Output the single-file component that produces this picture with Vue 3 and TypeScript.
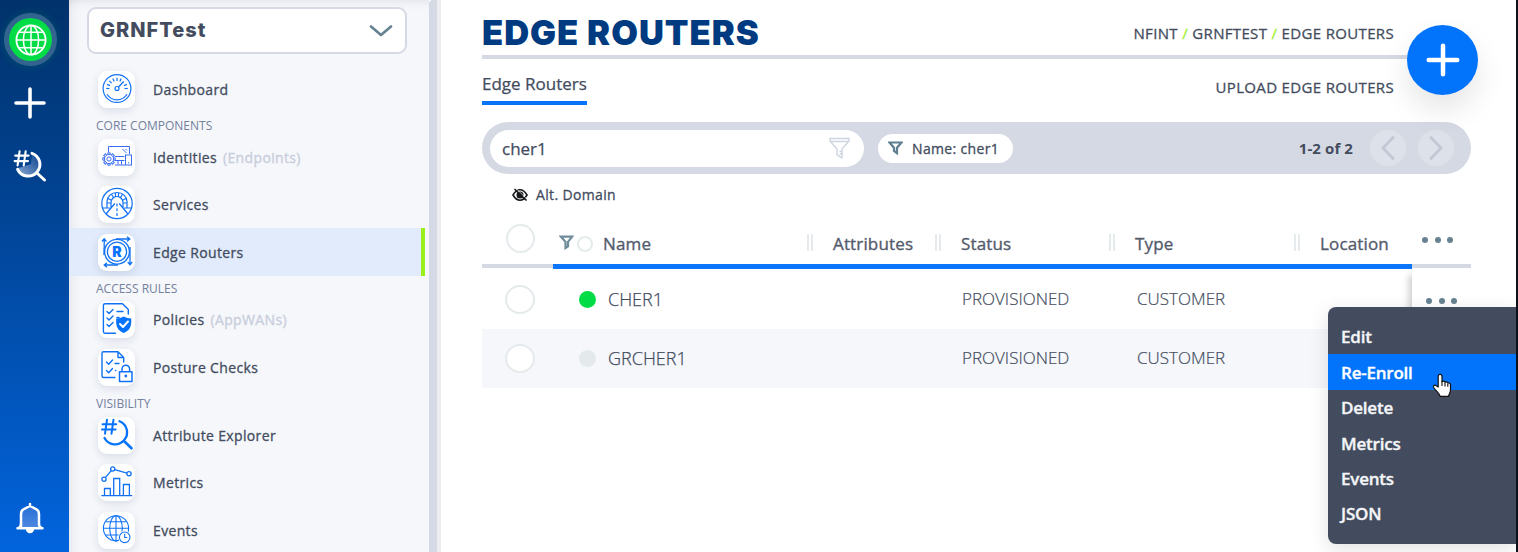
<script setup lang="ts">
interface NavItem {
  icon: string
  label: string
  hint?: string
  active?: boolean
}
interface NavGroup {
  title?: string
  items: NavItem[]
}

const groups: NavGroup[] = [
  { items: [{ icon: 'dashboard', label: 'Dashboard' }] },
  {
    title: 'CORE COMPONENTS',
    items: [
      { icon: 'identities', label: 'Identities', hint: '(Endpoints)' },
      { icon: 'services', label: 'Services' },
      { icon: 'routers', label: 'Edge Routers', active: true },
    ],
  },
  {
    title: 'ACCESS RULES',
    items: [
      { icon: 'policies', label: 'Policies', hint: '(AppWANs)' },
      { icon: 'posture', label: 'Posture Checks' },
    ],
  },
  {
    title: 'VISIBILITY',
    items: [
      { icon: 'attributes', label: 'Attribute Explorer' },
      { icon: 'metrics', label: 'Metrics' },
      { icon: 'events', label: 'Events' },
    ],
  },
]

const routers = [
  { name: 'CHER1', online: true, status: 'PROVISIONED', type: 'CUSTOMER' },
  { name: 'GRCHER1', online: false, status: 'PROVISIONED', type: 'CUSTOMER' },
]

const actions = ['Edit', 'Re-Enroll', 'Delete', 'Metrics', 'Events', 'JSON']
const hovered = 'Re-Enroll'

const ticks = Array.from({ length: 9 }, (_, i) => -90 + i * 22.5).filter((a) => a !== 45)
const teeth = Array.from({ length: 8 }, (_, i) => i * 45)
</script>

<template>
  <div class="app">
    <nav class="rail">
      <div class="org">
        <svg width="32" height="32" viewBox="0 0 32 32" fill="none" stroke="#fff" stroke-width="1.5">
          <circle cx="16" cy="16" r="14.6" stroke-width="1.8" />
          <ellipse cx="16" cy="16" rx="7.6" ry="14.6" />
          <path d="M16 1.4v29.2M1.4 16h29.2M3.6 8.3h24.8M3.6 23.7h24.8" />
        </svg>
      </div>
      <svg class="rail-plus" width="32" height="32" viewBox="0 0 32 32" stroke="#fff" stroke-width="3.6" stroke-linecap="round">
        <path d="M16 2v28M2 16h28" />
      </svg>
      <svg class="rail-find" width="34" height="34" viewBox="0 0 34 34" fill="none" stroke="#fff">
        <defs>
          <linearGradient id="lens" x1="0" y1="1" x2="1" y2="0">
            <stop offset="0" stop-color="#8aa8d2" />
            <stop offset="1" stop-color="#0a4390" />
          </linearGradient>
        </defs>
        <path d="M19 4.5a11.5 11.5 0 1 1-15 15L18 15z" fill="url(#lens)" stroke="none" />
        <path d="M19 4.3a11.7 11.7 0 1 1-14.400 16M24.500 24.500l7 6.500" stroke-width="3" stroke-linecap="round" />
        <path d="M6.600 2.200L4.600 16.400M12.700 2.200l-2 14.200M2.200 6.600h13.400M1.600 12.100H15" stroke-width="2.100" stroke-linecap="round" />
      </svg>
      <svg class="rail-bell" width="30" height="34" viewBox="0 0 30 34">
        <defs>
          <linearGradient id="bell" x1="0" y1="1" x2="0" y2="0">
            <stop offset="0" stop-color="#4d88e0" />
            <stop offset="1" stop-color="#2a70d6" />
          </linearGradient>
        </defs>
        <path d="M6 26.500V12L15 6l9 6v14.500z" fill="url(#bell)" />
        <path d="M2.500 27.300h25M6 27V13.400Q6 9.500 8.500 8.300L15 5l6.500 3.300Q24 9.500 24 13.400V23q0 3 2.500 4M6 22q0 4-2.500 5M15 5V3" fill="none" stroke="#fff" stroke-width="2.500" stroke-linecap="round" />
        <path d="M10.800 28h8.400a4.200 4.200 0 0 1-8.400 0z" fill="#fff" />
      </svg>
    </nav>

    <aside class="side">
      <div class="network">
        <span>GRNFTest</span>
        <svg width="24" height="14" viewBox="0 0 24 14" fill="none" stroke="#668291" stroke-width="2.700" stroke-linecap="round" stroke-linejoin="round">
          <path d="M2 2.500l10 8.500 10-8.500" />
        </svg>
      </div>
      <section v-for="(g, i) in groups" :key="i">
        <h2 v-if="g.title">{{ g.title }}</h2>
        <div v-for="item in g.items" :key="item.label" class="nav" :class="{ active: item.active }">
          <div class="tile">
            <svg width="37" height="37" viewBox="0 0 37 37" fill="none" stroke="#1071f5" stroke-width="1.200">
              <g v-if="item.icon === 'dashboard'">
                <circle cx="19" cy="17.500" r="13.900" />
                <circle cx="19" cy="17.500" r="2" />
                <path d="M20.500 16l5.200-5.500" stroke-width="1.300" />
                <path v-for="a in ticks" :key="a" d="M19 6.700v3.300" :transform="`rotate(${a} 19 17.500)`" />
                <path d="M9 23.300q3.500 5.500 10 5.500t10-5.500" />
              </g>
              <g v-else-if="item.icon === 'identities'" stroke="#3a6df3" stroke-width="1">
                <path d="M10.500 13V7.500h21V15M17 17.500h9.500M24.500 10l4 4M27.500 10l1.500 1.500M17 21.500h9.500M20 21.500v4M23.500 21.500v4M17 26h10" />
                <rect x="27.500" y="16" width="6" height="10" />
                <path d="M30 23.800h1.200" />
                <circle cx="11" cy="20" r="4.600" />
                <circle cx="11" cy="20" r="2.100" />
                <path v-for="a in teeth" :key="a" d="M9.800 15.300v-1.500h2.400v1.500" :transform="`rotate(${a} 11 20)`" />
              </g>
              <g v-else-if="item.icon === 'services'">
                <circle cx="19" cy="17.500" r="15.200" />
                <path d="M4.500 22h7.300M26.200 22h7.300M9 21.500V15.500a10 9 0 0 1 20 0v6M13 21.500v-5a6 6 0 0 1 12 0v5M9 17h4m12 0h4M10 12.500l4 2m14-2l-4 2M13.500 8.200l2.500 4m8.500-4l-2.500 4M17.500 6.700v4.300m3-4.300v4.300M16.800 17.500L8 28M21.200 17.500L30 28" />
                <path d="M19 17.500v15" stroke-dasharray="3 1.800" />
              </g>
              <g v-else-if="item.icon === 'routers'" stroke-width="1.300">
                <circle cx="19" cy="17.700" r="12.400" />
                <circle cx="19" cy="17.700" r="9.600" />
                <path d="M6.200 14V5.200M4 7.500l2.200-2.800 2.200 2.800M18 5h13.500M29 2.700L31.800 5 29 7.200M32 20v10.500M29.800 28l2.200 2.800L34.200 28M20 31H6.500M9 28.700L6.200 31 9 33.300M6 14v7M32 13v8" />
                <text x="19" y="22.700" text-anchor="middle" class="glyph">R</text>
              </g>
              <g v-else-if="item.icon === 'policies'" stroke-width="1.400" stroke-linecap="round" stroke-linejoin="round">
                <path d="M30.300 13V8.500L24.500 2.700H7Q5.400 2.700 5.400 4.300V30.500Q5.400 32.200 7 32.200H17.500M19 10.500h6M19 16.500h2" />
                <path d="M9 10.500l2 2 4-4M9 17l2 2 4-4M9 23.500l2 2 4-4" />
                <path d="M25.700 15.500q3.500 2 7.500 2c.6 8-1.500 12-7.500 14.500-6-2.500-8.100-6.500-7.500-14.500q4 0 7.500-2z" fill="#0773fb" stroke="none" />
                <path d="M22 23l3 3 5-5.500" stroke="#fff" stroke-width="2" />
              </g>
              <g v-else-if="item.icon === 'posture'" stroke-width="1.400" stroke-linecap="round" stroke-linejoin="round">
                <path d="M25.700 13V8.500L20 2.800H5.500Q4 2.800 4 4.300V27Q4 28.500 5.500 28.500H17M20 2.800V8.500h5.700M17 14.500h4M17.500 21.500h.3" />
                <path d="M8.500 13l2.200 2.200L14.500 11M8.500 21.500l2.200 2.200 3.800-4.200" />
                <path d="M21.500 22.800h12.500v9.800H21.500zM24 22.500v-2.500a3.800 3.800 0 0 1 7.600 0v2.500" stroke-width="1.500" />
                <circle cx="27.800" cy="27" r=".7" fill="#1071f5" />
              </g>
              <g v-else-if="item.icon === 'attributes'" stroke="#0773fb" stroke-linecap="round">
                <path d="M21.500 4.200A12 12 0 1 1 6.500 21" stroke-width="2.300" />
                <path d="M26.800 24.800l6.700 6.500" stroke-width="2.600" />
                <path d="M9 2.700L7 16.700M15.500 2.700l-2 14M4.600 7.200h13.600M4 12.500h13.600" stroke-width="2" />
              </g>
              <g v-else-if="item.icon === 'metrics'" stroke-width="1.300">
                <path d="M3.300 31.700h31M6.500 31.500v-7h5.800v7M15.700 31.500v-17h6v17M25.400 31.500v-11h6v11M7.300 13.600l6-7M16.700 5.600l12.300 3.600" />
                <circle cx="6" cy="15.300" r="2.100" />
                <circle cx="14.700" cy="5" r="2.100" />
                <circle cx="31" cy="9.700" r="2.100" />
              </g>
              <g v-else stroke-width="1.100">
                <circle cx="18" cy="16.300" r="12.600" />
                <ellipse cx="18" cy="16.300" rx="6.300" ry="12.600" />
                <path d="M18 3.700v25.200M5.400 16.300h25.200M7.500 9.700h21M7.500 23h21" />
                <circle cx="26.700" cy="25.300" r="6.600" fill="#fff" stroke="none" />
                <circle cx="26.700" cy="25.300" r="5.300" />
                <path d="M26.700 21.800v3.700h2.600" />
              </g>
            </svg>
          </div>
          <span class="label">{{ item.label }}</span>
          <span v-if="item.hint" class="hint">{{ item.hint }}</span>
        </div>
      </section>
    </aside>
    <div class="scroll"></div>

    <main>
      <header>
        <h1>EDGE ROUTERS</h1>
        <div class="crumbs">NFINT <i>/</i> GRNFTEST <i>/</i> EDGE ROUTERS</div>
      </header>
      <div class="tabs">
        <span class="tab">Edge Routers</span>
        <span class="upload">UPLOAD EDGE ROUTERS</span>
      </div>

      <div class="filter">
        <div class="search">
          <span>cher1</span>
          <svg width="21" height="22" viewBox="0 0 21 22" fill="none" stroke="#ced4e0" stroke-width="1.400" stroke-linejoin="round">
            <path d="M1 1.500h19v2.500l-7 8v9l-5-3.200V12L1 4zM1 4.500h19M10.500 14.500h2.500M10.500 17h2.500" />
          </svg>
        </div>
        <div class="chip">
          <svg width="15" height="14" viewBox="0 0 15 14" fill="none" stroke="#5f7f91" stroke-width="2.200">
            <path d="M1.500 1.500h12L9 6.700v5.500L6 10V6.700z" />
          </svg>
          <span>Name: cher1</span>
        </div>
        <span class="count">1-2 of 2</span>
        <div class="page">
          <svg width="14" height="24" viewBox="0 0 14 24"><path d="M12 1.500L2 12l10 10.500" /></svg>
        </div>
        <div class="page next">
          <svg width="14" height="24" viewBox="0 0 14 24"><path d="M2 1.500L12 12 2 22.500" /></svg>
        </div>
      </div>

      <div class="toggle">
        <svg width="16" height="14" viewBox="0 0 16 14" fill="none" stroke="#16181c">
          <path d="M1 7Q4 1.800 8 1.800T15 7Q12 12.200 8 12.200T1 7z" stroke-width="1.600" />
          <circle cx="8" cy="7" r="3.500" fill="#16181c" stroke="none" />
          <path d="M2.500 1l12 11.500" stroke-width="1.700" />
          <path d="M4 .5l11 10.500" stroke="#fff" stroke-width=".6" />
        </svg>
        <span>Alt. Domain</span>
      </div>

      <div class="grid">
        <div class="row head">
          <div class="c-check"><span class="ring"></span></div>
          <div class="c-name">
            <svg width="15" height="15" viewBox="0 0 15 15" fill="none" stroke="#6f8c9b" stroke-width="2.200">
              <path d="M1.800 1.600h11.400L9 6.800v4.700L6.500 13V6.800z" />
            </svg>
            <span class="mini"></span>
            <b>Name</b>
          </div>
          <div class="c-attr"><b>Attributes</b></div>
          <div class="c-status"><b>Status</b></div>
          <div class="c-type"><b>Type</b></div>
          <div class="c-loc"><b>Location</b></div>
          <div class="c-more"><u></u><u></u><u></u></div>
        </div>
        <div v-for="r in routers" :key="r.name" class="row body">
          <div class="c-check"><span class="ring"></span></div>
          <div class="c-name"><span class="dot" :class="{ on: r.online }"></span><span class="rname">{{ r.name }}</span></div>
          <div class="c-attr"></div>
          <div class="c-status">{{ r.status }}</div>
          <div class="c-type">{{ r.type }}</div>
          <div class="c-loc"></div>
          <div class="c-more"><u></u><u></u><u></u></div>
        </div>
      </div>
    </main>
    <div class="edge"></div>

    <button class="add">
      <svg width="34" height="34" viewBox="0 0 34 34" stroke="#fff" stroke-width="4.500" stroke-linecap="round">
        <path d="M17 2.700v28.600M2.700 17h28.600" />
      </svg>
    </button>

    <ul class="menu">
      <li v-for="a in actions" :key="a" :class="{ hover: a === hovered }">{{ a }}</li>
    </ul>
    <svg class="cursor" width="20" height="26" viewBox="0 0 20 26">
      <path d="M6.200 14V3.200a1.900 1.900 0 0 1 3.800 0V8.500q2-.8 3 .7 1.800-.7 2.800.8 2.500-.4 2.700 1.800v5c0 3-1.500 4-2 6.500H8.200C7.500 20.500 3.500 17.500 1.700 14.500.8 12.800 2.500 11.500 4 12.500z" fill="#fff" stroke="#111" stroke-width="1.200" stroke-linejoin="round" />
      <path d="M10 8v5M13 9.500v4M15.800 10.500v3.300" stroke="#111" stroke-width="1.100" />
    </svg>
  </div>
</template>

<style>
body {
  margin: 0;
  overflow: hidden;
}
</style>

<style scoped>
* {
  box-sizing: border-box;
}
.app {
  position: relative;
  display: flex;
  width: 1518px;
  height: 552px;
  overflow: hidden;
  background: #fff;
  color: #434c5e;
  font-family: 'Open Sans', 'Noto Sans', sans-serif;
}
svg {
  display: block;
  flex: none;
}
.rail {
  width: 69px;
  flex: none;
  display: flex;
  flex-direction: column;
  padding: 13px 0 0 4px;
  background: linear-gradient(180deg, #01326b 0%, #01408c 30%, #0264dd 100%);
}
.org {
  width: 53px;
  height: 53px;
  display: flex;
  align-items: center;
  justify-content: center;
  border: 5px solid #33648f;
  border-radius: 50%;
  background: #02dc46;
  box-shadow: 0 0 10px rgba(0, 190, 90, 0.2);
}
.rail-plus {
  margin: 21px 0 0 10px;
}
.rail-find {
  margin: 30px 0 0 9px;
}
.rail-bell {
  margin: auto 0 17px 11px;
}
.side {
  width: 360px;
  flex: none;
  padding-top: 7px;
  background: #f5f7fb;
  box-shadow: inset 14px 0 12px -12px rgba(60, 60, 80, 0.1), inset 0 10px 10px -8px rgba(60, 60, 80, 0.1);
}
.network {
  width: 320px;
  height: 47px;
  margin: 0 0 11.700px 18px;
  padding: 0 12px 0 11px;
  display: flex;
  align-items: center;
  justify-content: space-between;
  border: 2px solid #d5d9e3;
  border-radius: 9px;
  background: #fff;
  font: 800 20px Inter, sans-serif;
  letter-spacing: 1px;
}
.network span {
  margin-top: -2px;
}
.side h2 {
  height: 20.300px;
  margin: 0;
  padding-left: 27px;
  font-size: 12px;
  font-weight: 400;
  line-height: 26.800px;
  color: #74809d;
}
.side section:last-child h2 {
  height: 20.400px;
}
.nav {
  width: 356px;
  height: 47.400px;
  display: flex;
  align-items: center;
  padding-left: 29px;
  font-size: 14px;
}
.nav:nth-child(3):not(.active) {
  height: 47.700px;
}
.nav,
.chip,
.toggle {
  font-weight: 500;
  letter-spacing: 0.350px;
  -webkit-text-stroke: 0.300px currentColor;
}
.nav.active {
  background: #e1ebfb;
  border-right: 4px solid #97f01c;
}
.tile {
  width: 37px;
  height: 37px;
  border-radius: 9px;
  background: #fff;
  box-shadow: 0 3px 8px rgba(60, 70, 100, 0.14);
}
.glyph {
  font: 900 14px Inter, sans-serif;
  letter-spacing: 0;
  fill: #0773fb;
  stroke: none;
}
.label {
  margin-left: 18px;
}
.hint {
  margin-left: 6px;
  color: #c8cddb;
}
.scroll {
  width: 12px;
  flex: none;
  border-right: 4px solid #ececf1;
  background: #d5d9e3;
  border-top-left-radius: 4px;
}
main {
  width: 1075px;
  flex: none;
  padding-left: 41px;
}
.edge {
  width: 2px;
  background: #0d121c;
}
header {
  width: 989px;
  height: 59px;
  display: flex;
  justify-content: space-between;
  border-bottom: 4px solid #d5d9e3;
}
h1 {
  margin: 0;
  font: 900 34.500px/66px Inter, sans-serif;
  letter-spacing: 1px;
  color: #003a80;
  white-space: nowrap;
}
.crumbs,
.upload {
  padding-right: 77px;
  font-size: 15px;
  font-weight: 500;
  line-height: 67px;
  letter-spacing: 0.340px;
  -webkit-text-stroke: 0.300px currentColor;
}
.crumbs i {
  font-style: normal;
  color: #9ef02a;
}
.tabs {
  width: 989px;
  height: 63px;
  display: flex;
  justify-content: space-between;
}
.tab {
  height: 46px;
  border-bottom: 4px solid #0273fb;
  font-size: 17px;
  font-weight: 500;
  line-height: 50px;
  -webkit-text-stroke: 0.250px currentColor;
}
.upload {
  line-height: 57px;
}
.filter {
  width: 989px;
  height: 52px;
  display: flex;
  align-items: center;
  padding: 0 17px 0 8px;
  border-radius: 26px;
  background: #d5d9e3;
}
.search {
  width: 374px;
  height: 37px;
  display: flex;
  align-items: center;
  justify-content: space-between;
  padding: 0 14px 0 12px;
  border-radius: 19px;
  background: #fff;
  font-size: 17px;
  font-weight: 500;
  -webkit-text-stroke: 0.250px currentColor;
}
.chip {
  width: 135px;
  height: 29px;
  margin-left: 14px;
  padding-left: 10px;
  display: flex;
  align-items: center;
  gap: 9px;
  border-radius: 15px;
  background: #fff;
  font-size: 14px;
}
.count {
  margin-left: auto;
  font-size: 15px;
  font-weight: 700;
  letter-spacing: 0.100px;
}
.page {
  width: 36px;
  height: 36px;
  margin-left: 17px;
  display: flex;
  align-items: center;
  justify-content: center;
  border-radius: 50%;
  background: #dde1e9;
}
.page svg {
  fill: none;
  stroke: #c3c8d5;
  stroke-width: 2.800;
  stroke-linecap: round;
}
.page.next {
  margin-left: 12px;
}
.toggle {
  height: 42px;
  display: flex;
  align-items: center;
  gap: 8px;
  padding: 0 0 1px 30px;
  font-size: 14px;
}
.row {
  width: 989px;
  height: 59px;
  display: grid;
  grid-template-columns: 71px 254px 128px 174px 185px 118px 59px;
}
.row.head {
  height: 54px;
}
.head {
  color: #535b6c;
  font-size: 17px;
}
.head b {
  margin-top: 3px;
  font-weight: 500;
  letter-spacing: 0.150px;
  -webkit-text-stroke: 0.350px currentColor;
}
.head > div {
  display: flex;
  align-items: center;
  padding-top: 4px;
  border-bottom: 5px solid #0b76fc;
  height: 53px;
}
.head > .c-check,
.head > .c-more {
  height: 52px;
  border-bottom: 4px solid #d5d9e3;
}
.head > .c-attr::before,
.head > .c-status::before,
.head > .c-type::before,
.head > .c-loc::before {
  content: '';
  width: 2px;
  height: 17px;
  margin-right: 20px;
  border: solid #e5ebec;
  border-width: 0 2px;
}
.head .c-name {
  padding-left: 6px;
}
.head .mini {
  width: 16px;
  height: 16px;
  margin: 4px 10px 0 3px;
  border: 2px solid #e5ebec;
  border-radius: 50%;
}
.head > .c-check {
  padding: 0 0 3px 24px;
}
.head .ring {
  width: 29px;
}
.c-check {
  display: flex;
  align-items: center;
  padding-left: 23px;
}
.ring {
  width: 30px;
  height: 29px;
  border: 2px solid #e5ebec;
  border-radius: 50%;
  background: #fff;
}
.body > div {
  display: flex;
  align-items: center;
}
.body:last-child {
  background: #f5f7fb;
}
.dot {
  width: 17px;
  height: 17px;
  margin: 0 12px 0 26px;
  border-radius: 50%;
  background: #e4eaec;
}
.dot.on {
  background: #02dc46;
}
.rname {
  margin-top: -2px;
  font-size: 18px;
  font-weight: 300;
  -webkit-text-stroke: 0.250px currentColor;
}
.body .c-status,
.body .c-type {
  padding: 0 0 2px 27px;
  font-size: 17px;
  font-weight: 300;
  -webkit-text-stroke: 0.200px currentColor;
}
.body .c-type {
  padding-left: 28px;
}
.c-more {
  gap: 6.600px;
  padding-left: 10px;
}
.head > .c-more {
  padding-top: 0;
}
.body .c-more {
  padding: 3px 0 0 14px;
  background: #fff;
  box-shadow: -4px 4px 7px -1px rgba(0, 0, 0, 0.2);
  clip-path: inset(0 0 0 -12px);
}
.c-more u {
  width: 6px;
  height: 6px;
  border-radius: 50%;
  background: #668291;
}
.add {
  position: absolute;
  left: 1407px;
  top: 25px;
  width: 71px;
  height: 70px;
  padding: 0;
  display: flex;
  align-items: center;
  justify-content: center;
  border: 0;
  border-radius: 50%;
  background: #0273fb;
  box-shadow: 0 15px 30px rgba(0, 0, 0, 0.1);
}
.menu {
  position: absolute;
  left: 1328px;
  top: 307px;
  width: 188px;
  height: 237px;
  margin: 0;
  padding: 12px 0 0;
  list-style: none;
  border-radius: 8px 0 0 8px;
  background: #434c5e;
  box-shadow: 0 5px 20px rgba(0, 0, 0, 0.12);
  color: #f4f5f8;
  font-size: 17px;
  font-weight: 600;
  letter-spacing: -0.220px;
  -webkit-text-stroke: 0.350px currentColor;
}
.menu li {
  height: 35.400px;
  padding-left: 13px;
  line-height: 36.800px;
}
.menu li.hover {
  background: #0273fb;
  color: #fff;
  line-height: 38px;
}
.menu li:nth-child(4) {
  line-height: 38px;
}
.cursor {
  position: absolute;
  left: 1432px;
  top: 373px;
}
</style>
